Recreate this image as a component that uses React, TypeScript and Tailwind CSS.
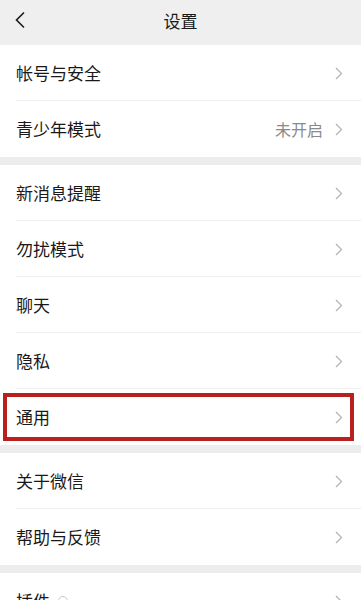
import React from "react"

type Item = { label: string; value?: string; marked?: boolean; extra?: boolean }

const groups: Item[][] = [
    [{ label: "帐号与安全" }, { label: "青少年模式", value: "未开启" }],
    [
        { label: "新消息提醒" },
        { label: "勿扰模式" },
        { label: "聊天" },
        { label: "隐私" },
        { label: "通用", marked: true },
    ],
    [{ label: "关于微信" }, { label: "帮助与反馈" }],
    [{ label: "插件", extra: true }],
]

function Chevron() {
    return (
        <svg width="8" height="13" viewBox="0 0 8 13" fill="none" className="shrink-0">
            <path d="M1 1l5.5 5.5L1 12" stroke="#b4b4b4" strokeWidth="1.3" />
        </svg>
    )
}

function Row({ item, last }: { item: Item; last: boolean }) {
    return (
        <div className="relative h-[56px] flex items-center pl-4 bg-white">
            <div className="flex-1 flex items-center gap-2 text-[17px] text-[#191919]">
                {item.label}
                {item.extra && <span className="w-[10px] h-[10px] rounded-full border border-[#c8c8c8]" />}
            </div>
            {item.value && <span className="text-[16px] text-[#8a8a8a] mr-3">{item.value}</span>}
            <div className="pr-[18px] flex items-center">
                <Chevron />
            </div>
            {!last && <div className="absolute left-4 right-0 bottom-0 h-px bg-[#efefef]" />}
            {item.marked && (
                <div className="absolute left-[3px] right-[7px] top-[4px] bottom-[4px] border-[4px] border-[#b8211e]" />
            )}
        </div>
    )
}

export default function App() {
    return (
        <div className="w-[361px] h-[600px] overflow-hidden bg-[#ededed]" style={{ fontFamily: '"Noto Sans CJK SC", "Noto Sans", sans-serif' }}>
            {/* header */}
            <div className="relative h-[45px] flex items-center justify-center pb-[4px] bg-[#efefef]">
                <svg width="12" height="18" viewBox="0 0 12 18" fill="none" className="absolute left-[14px] top-[11px]">
                    <path d="M10 1.5L2.5 9l7.5 7.5" stroke="#1a1a1a" strokeWidth="1.6" />
                </svg>
                <span className="text-[17px] text-[#191919]">设置</span>
            </div>
            <div className="flex flex-col gap-[8px]">
                {groups.map((g, gi) => (
                    <div key={gi} className="flex flex-col">
                        {g.map((item, i) => (
                            <Row key={item.label} item={item} last={i === g.length - 1} />
                        ))}
                    </div>
                ))}
            </div>
        </div>
    )
}
